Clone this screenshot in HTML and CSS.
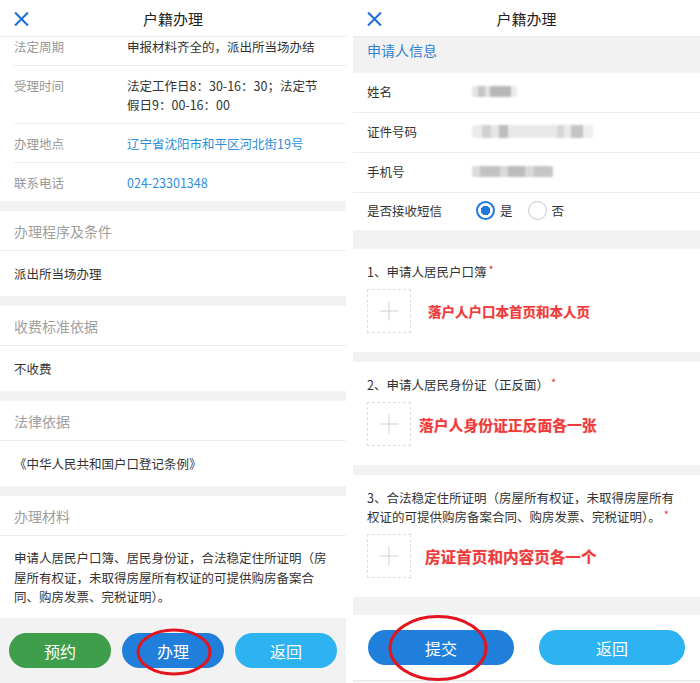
FILE: index.html
```html
<!DOCTYPE html>
<html lang="zh-CN">
<head>
<meta charset="utf-8">
<title>户籍办理</title>
<link rel="stylesheet" href="styles.css">
</head>
<body>
<div class="page">
  <section class="phone phone-left">
    <header class="topbar">
      <svg class="close" viewBox="0 0 16 16" aria-hidden="true"><path d="M1.5 1.5L14.5 14.5M14.5 1.5L1.5 14.5"/></svg>
      <div class="title">户籍办理</div>
    </header>
    <div class="scroll">
      <div class="info">
        <div class="irow irow-first"><div class="ilabel">法定周期</div><div class="ival">申报材料齐全的，派出所当场办结</div></div>
        <div class="irow"><div class="ilabel">受理时间</div><div class="ival">法定工作日8：30-16：30；法定节假日9：00-16：00</div></div>
        <div class="irow"><div class="ilabel">办理地点</div><div class="ival link">辽宁省沈阳市和平区河北街19号</div></div>
        <div class="irow irow-last"><div class="ilabel">联系电话</div><div class="ival link">024-23301348</div></div>
      </div>
      <div class="gap"></div>
      <div class="sechead">办理程序及条件</div>
      <div class="secbody">派出所当场办理</div>
      <div class="gap"></div>
      <div class="sechead">收费标准依据</div>
      <div class="secbody">不收费</div>
      <div class="gap"></div>
      <div class="sechead">法律依据</div>
      <div class="secbody">《中华人民共和国户口登记条例》</div>
      <div class="gap"></div>
      <div class="sechead">办理材料</div>
      <div class="secbody secbody-long">申请人居民户口簿、居民身份证，合法稳定住所证明（房屋所有权证，未取得房屋所有权证的可提供购房备案合同、购房发票、完税证明）。</div>
    </div>
    <footer class="lfoot">
      <div class="btn btn-green">预约</div>
      <div class="btn btn-blue">办理</div>
      <div class="btn btn-light">返回</div>
    </footer>
    <svg class="ring ring-left" viewBox="0 0 76 48" aria-hidden="true"><ellipse cx="38" cy="24" rx="36" ry="22"/></svg>
  </section>

  <section class="phone phone-right">
    <header class="topbar">
      <svg class="close" viewBox="0 0 16 16" aria-hidden="true"><path d="M1.5 1.5L14.5 14.5M14.5 1.5L1.5 14.5"/></svg>
      <div class="title">户籍办理</div>
    </header>
    <div class="scroll">
      <div class="grouphead">申请人信息</div>
      <div class="frow"><div class="flabel">姓名</div><div class="blur blur-name"></div></div>
      <div class="frow"><div class="flabel">证件号码</div><div class="blur blur-id"></div></div>
      <div class="frow"><div class="flabel">手机号</div><div class="blur blur-phone"></div></div>
      <div class="frow frow-last">
        <div class="flabel">是否接收短信</div>
        <div class="radios">
          <span class="radio radio-on"></span><span class="rtext">是</span>
          <span class="radio"></span><span class="rtext">否</span>
        </div>
      </div>
      <div class="gap gap-big"></div>
      <div class="item">
        <div class="itemtitle">1、申请人居民户口簿<span class="req">*</span></div>
        <div class="uprow">
          <div class="upload"><svg viewBox="0 0 44 44" aria-hidden="true"><path d="M22 12V32M12 22H32"/></svg></div>
          <div class="note note-1">落户人户口本首页和本人页</div>
        </div>
      </div>
      <div class="gap"></div>
      <div class="item">
        <div class="itemtitle">2、申请人居民身份证（正反面）<span class="req">*</span></div>
        <div class="uprow">
          <div class="upload"><svg viewBox="0 0 44 44" aria-hidden="true"><path d="M22 12V32M12 22H32"/></svg></div>
          <div class="note note-2">落户人身份证正反面各一张</div>
        </div>
      </div>
      <div class="gap"></div>
      <div class="item">
        <div class="itemtitle"><span>3、合法稳定住所证明（房屋所有权证，未取得房屋所有</span><span>权证的可提供购房备案合同、购房发票、完税证明）。</span><span class="req req-end">*</span></div>
        <div class="uprow">
          <div class="upload"><svg viewBox="0 0 44 44" aria-hidden="true"><path d="M22 12V32M12 22H32"/></svg></div>
          <div class="note note-3">房证首页和内容页各一个</div>
        </div>
      </div>
      <div class="gap gap-foot"></div>
    </div>
    <footer class="rfoot">
      <div class="btn btn-blue btn-big">提交</div>
      <div class="btn btn-light btn-big">返回</div>
    </footer>
    <div class="rbottom"></div>
    <svg class="ring ring-right" viewBox="0 0 100 68" aria-hidden="true"><ellipse cx="50" cy="34" rx="48" ry="31.5"/></svg>
  </section>
</div>
</body>
</html>
```

FILE: styles.css
```css
* { box-sizing: border-box; }

html, body {
  margin: 0;
  padding: 0;
  background: #ffffff;
}

body {
  font-family: "Noto Sans CJK SC", "Noto Sans", "Liberation Sans", sans-serif;
  color: #333333;
  font-size: 12.5px;
}

.page {
  display: flex;
  gap: 7px;
  width: 700px;
  height: 683px;
  overflow: hidden;
}

.phone {
  position: relative;
  display: flex;
  flex-direction: column;
  height: 683px;
  overflow: hidden;
  background: #ffffff;
}

.phone-left { width: 346px; }
.phone-right { width: 347px; }

/* header */
.topbar {
  position: relative;
  flex: 0 0 auto;
  height: 37px;
  border-bottom: 1px solid #ececec;
  display: flex;
  align-items: center;
  justify-content: center;
  background: #ffffff;
}

.close {
  position: absolute;
  left: 14px;
  top: 12px;
  width: 15px;
  height: 14px;
  fill: none;
  stroke: #1b6fd6;
  stroke-width: 2.4;
  stroke-linecap: square;
}

.title {
  font-size: 15px;
  line-height: 19px;
  color: #222222;
  margin-top: 1px;
}

.scroll {
  flex: 1 1 auto;
  display: flex;
  flex-direction: column;
  overflow: hidden;
}

.gap {
  flex: 0 0 auto;
  height: 10px;
  background: #f2f2f2;
}

/* left info rows */
.info {
  padding-left: 14px;
}

.irow {
  display: flex;
  padding: 10px 20px 9px 0;
  border-bottom: 1px solid #eeeeee;
  line-height: 19px;
}

.irow-first { padding-top: 0; }
.irow-last { border-bottom: none; }

.ilabel {
  flex: 0 0 113px;
  color: #999999;
}

.ival {
  flex: 1 1 auto;
  color: #333333;
}

.ival.link { color: #2b8fdc; }

.sechead {
  padding: 11px 14px 9px;
  line-height: 19px;
  font-size: 14px;
  color: #a0a0a0;
  border-bottom: 1px solid #eeeeee;
}

.secbody {
  padding: 13px 14px;
  line-height: 19px;
  color: #333333;
}

.secbody-long {
  padding: 12px 14px 11.5px;
  line-height: 19.5px;
}

/* left footer */
.lfoot {
  flex: 0 0 65px;
  display: flex;
  gap: 11px;
  padding: 15px 9px 0;
  background: #f2f2f2;
}

.btn {
  flex: 1 1 0;
  height: 35px;
  border-radius: 18px;
  color: #ffffff;
  font-size: 16px;
  display: flex;
  align-items: center;
  justify-content: center;
}

.btn-green { background: #3f9e4b; }
.btn-blue { background: #1f7fdb; }
.btn-light { background: #2db3f1; }

/* right panel */
.grouphead {
  padding: 4px 14px 13px;
  line-height: 19px;
  font-size: 14px;
  color: #2f7fd2;
  background: #f2f2f2;
}

.frow {
  display: flex;
  align-items: center;
  height: 40px;
  padding: 0 14px 2px;
  border-bottom: 1px solid #eeeeee;
  line-height: 19px;
}

.frow-last {
  height: 37px;
  border-bottom: none;
}

.flabel {
  flex: 0 0 105px;
  color: #333333;
}

.blur {
  filter: blur(1.3px);
  border-radius: 2px;
}

.blur-name {
  width: 45px;
  height: 11px;
  background: linear-gradient(90deg, #e4e4e4 0 14%, #c6c6c6 14% 30%, #e2e2e2 30% 40%, #b8b8b8 40% 86%, #ebebeb 86%);
}

.blur-id {
  width: 121px;
  height: 13px;
  background: linear-gradient(90deg, #ebebeb 0 8%, #d0d0d0 8% 16%, #e6e6e6 16% 22%, #bdbdbd 22% 30%, #e9e9e9 30% 70%, #d6d6d6 70% 76%, #eaeaea 76% 82%, #c4c4c4 82% 92%, #eeeeee 92%);
}

.blur-phone {
  width: 81px;
  height: 11px;
  background: linear-gradient(90deg, #dcdcdc 0 10%, #c2c2c2 10% 34%, #dadada 34% 44%, #bcbcbc 44% 66%, #d8d8d8 66% 76%, #c6c6c6 76% 100%);
}

.radios {
  display: flex;
  align-items: center;
  margin-left: 4px;
}

.radio {
  width: 19px;
  height: 19px;
  border-radius: 50%;
  border: 1px solid #c8c8c8;
  background: #ffffff;
}

.radio-on {
  border: 2px solid #1f78e0;
  background: radial-gradient(circle, #1f78e0 0 4.5px, #ffffff 5px);
}

.rtext {
  margin: 0 15px 0 5px;
  color: #333333;
}

.gap-big { height: 19px; }
.gap-foot { height: 18px; }

.item {
  padding: 13px 16px 19px 14px;
}

.itemtitle {
  line-height: 19px;
  color: #333333;
}

.req {
  display: inline-block;
  color: #e23b3b;
  font-size: 11px;
  line-height: 11px;
  vertical-align: 3px;
  margin-left: 2px;
}

.req-end { margin-left: 3px; }

.uprow {
  display: flex;
  align-items: center;
  margin-top: 8px;
}

.upload {
  flex: 0 0 44px;
  width: 44px;
  height: 44px;
  border: 1px dashed #dedede;
}

.upload svg {
  display: block;
  width: 42px;
  height: 42px;
  fill: none;
  stroke: #cfcfcf;
  stroke-width: 1;
}

.note {
  color: #ee3b3b;
  font-weight: 700;
  white-space: nowrap;
  text-shadow: 0 0 1px rgba(238, 59, 59, 0.5);
}

.note-1 { margin-left: 17px; font-size: 13.5px; }
.note-2 { margin-left: 8px; font-size: 14.8px; }
.note-3 { margin-left: 14px; font-size: 15.6px; }

.rfoot {
  flex: 0 0 65px;
  display: flex;
  gap: 25px;
  padding: 15px 15px 0;
  background: #ffffff;
}

.rbottom {
  flex: 0 0 3px;
  border-top: 1px solid #e8e8e8;
  background: #f6f6f6;
}

/* red annotation rings */
.ring {
  position: absolute;
  fill: none;
  stroke: #e3141d;
  stroke-width: 3;
}

.ring-left {
  left: 136px;
  top: 628px;
  width: 76px;
  height: 48px;
}

.ring-right {
  left: 35px;
  top: 614px;
  width: 100px;
  height: 68px;
}
```
